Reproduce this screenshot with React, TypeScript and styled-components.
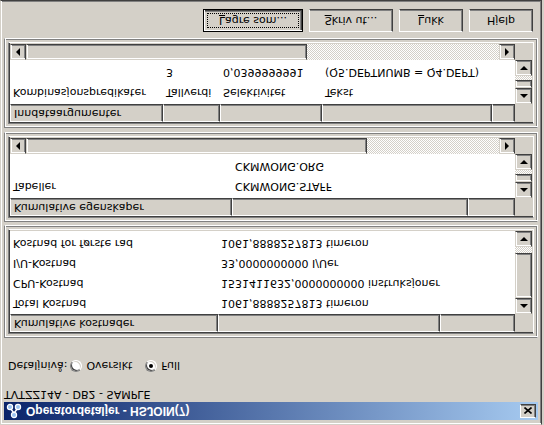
import React from "react";
import styled, { createGlobalStyle } from "styled-components";

const GlobalStyle = createGlobalStyle`
  html, body {
    margin: 0;
    padding: 0;
    background: #d4d0c8;
  }
  body {
    font-family: "DejaVu Sans", "Liberation Sans", sans-serif;
    font-size: 11px;
    color: #000;
  }
`;

// the reference is shown upside down, so the whole dialog is mirrored vertically
const Stage = styled.div`
  width: 544px;
  height: 425px;
  overflow: hidden;
  background: #d4d0c8;
  transform: scaleY(-1);
`;

const Window = styled.div`
  box-sizing: border-box;
  width: 542px;
  height: 425px;
  display: flex;
  flex-direction: column;
  padding: 3px;
  border: 1px solid;
  border-color: #d4d0c8 #404040 #404040 #d4d0c8;
  box-shadow: inset 1px 1px 0 #fff, inset -1px -1px 0 #808080;
`;

const TitleBar = styled.div`
  height: 18px;
  margin-top: 1px;
  display: flex;
  align-items: center;
  padding: 0 2px;
  background: linear-gradient(to right, #0a246a, #a6caf0);
  color: #fff;
`;

const TitleText = styled.span`
  flex: 1;
  margin-left: 4px;
  font-family: "Liberation Sans", Arial, sans-serif;
  font-weight: bold;
  font-size: 12px;
  white-space: nowrap;
`;

const CloseBtn = styled.div`
  box-sizing: border-box;
  width: 16px;
  height: 14px;
  display: flex;
  align-items: center;
  justify-content: center;
  background: #d4d0c8;
  border: 1px solid;
  border-color: #fff #404040 #404040 #fff;
  box-shadow: inset -1px -1px 0 #808080;
`;

const SubTitle = styled.div`
  height: 16px;
  line-height: 16px;
  white-space: nowrap;
`;

const DetailRow = styled.div`
  margin-top: 12px;
  height: 16px;
  display: flex;
  align-items: center;
  padding-left: 4px;
`;

const RadioOpt = styled.label<{ $gap: number }>`
  display: flex;
  align-items: center;
  gap: 4px;
  margin-left: ${(p) => p.$gap}px;
`;

const Radio = styled.span<{ $on?: boolean }>`
  box-sizing: border-box;
  width: 12px;
  height: 12px;
  border-radius: 50%;
  background: #fff;
  border: 1px solid;
  border-color: #808080 #fff #fff #808080;
  box-shadow: inset 1px 1px 0 #404040, inset -1px -1px 0 #d4d0c8;
  display: flex;
  align-items: center;
  justify-content: center;

  &::after {
    content: "";
    width: 4px;
    height: 4px;
    border-radius: 50%;
    background: ${(p) => (p.$on ? "#000" : "transparent")};
  }
`;

const Panel = styled.div<{ $h: number; $mt: number }>`
  box-sizing: border-box;
  height: ${(p) => p.$h}px;
  margin-top: ${(p) => p.$mt}px;
  padding: 3px;
  display: flex;
  border: 1px solid;
  border-color: #808080 #fff #fff #808080;
  box-shadow: inset 1px 1px 0 #fff, inset -1px -1px 0 #808080;
`;

const ListFrame = styled.div<{ $hscroll: boolean }>`
  flex: 1;
  display: grid;
  grid-template-columns: 505px 17px;
  grid-template-rows: ${(p) => (p.$hscroll ? "18px 1fr 16px" : "18px 1fr")};
  padding: 1px;
  border: 1px solid;
  border-color: #808080 #fff #fff #808080;
  box-shadow: inset 1px 1px 0 #404040, inset -1px -1px 0 #d4d0c8;
`;

const HeaderRow = styled.div`
  display: flex;
`;

const HeaderCell = styled.div<{ $w?: number }>`
  box-sizing: border-box;
  ${(p) => (p.$w ? `width: ${p.$w}px;` : "flex: 1;")}
  height: 18px;
  line-height: 16px;
  padding-left: 3px;
  white-space: nowrap;
  overflow: hidden;
  background: #d4d0c8;
  border: 1px solid;
  border-color: #fff #404040 #404040 #fff;
  box-shadow: inset -1px -1px 0 #808080;
`;

const HeaderGap = styled.div`
  background: #d4d0c8;
`;

const Rows = styled.div<{ $pt: number }>`
  background: #fff;
  padding-top: ${(p) => p.$pt}px;
  overflow: hidden;
`;

const Row = styled.div`
  display: flex;
  height: 20px;
  line-height: 20px;
`;

const Cell = styled.div<{ $w?: number }>`
  box-sizing: border-box;
  ${(p) => (p.$w ? `width: ${p.$w}px;` : "flex: 1;")}
  padding-left: 3px;
  white-space: nowrap;
`;

const VScroll = styled.div`
  display: flex;
  flex-direction: column;
`;

const HScroll = styled.div`
  display: flex;
`;

const Track = styled.div`
  flex: 1;
  background: repeating-conic-gradient(#fff 0 25%, #d4d0c8 0 50%) 0 0 / 2px 2px;
`;

const Thumb = styled.div<{ $size: number; $vertical?: boolean }>`
  box-sizing: border-box;
  flex: none;
  ${(p) => (p.$vertical ? `height: ${p.$size}px;` : `width: ${p.$size}px;`)}
  background: #d4d0c8;
  border: 1px solid;
  border-color: #d4d0c8 #404040 #404040 #d4d0c8;
  box-shadow: inset 1px 1px 0 #fff, inset -1px -1px 0 #808080;
`;

const ScrollBtn = styled.div<{ $dir: "up" | "down" | "left" | "right" }>`
  box-sizing: border-box;
  flex: none;
  width: ${(p) => (p.$dir === "up" || p.$dir === "down" ? "17px" : "16px")};
  height: 16px;
  display: flex;
  align-items: center;
  justify-content: center;
  background: #d4d0c8;
  border: 1px solid;
  border-color: #d4d0c8 #404040 #404040 #d4d0c8;
  box-shadow: inset 1px 1px 0 #fff, inset -1px -1px 0 #808080;

  &::after {
    content: "";
    width: 0;
    height: 0;
    ${(p) =>
      p.$dir === "up"
        ? "border-left: 4px solid transparent; border-right: 4px solid transparent; border-bottom: 4px solid #000;"
        : p.$dir === "down"
        ? "border-left: 4px solid transparent; border-right: 4px solid transparent; border-top: 4px solid #000;"
        : p.$dir === "left"
        ? "border-top: 4px solid transparent; border-bottom: 4px solid transparent; border-right: 4px solid #000;"
        : "border-top: 4px solid transparent; border-bottom: 4px solid transparent; border-left: 4px solid #000;"}
  }
`;

const Corner = styled.div`
  background: #d4d0c8;
`;

const ButtonRow = styled.div`
  margin-top: 6px;
  display: flex;
  justify-content: flex-end;
  gap: 6px;
  padding-right: 5px;
`;

const PushButton = styled.div<{ $w: number; $default?: boolean }>`
  box-sizing: border-box;
  width: ${(p) => p.$w}px;
  height: 23px;
  padding: 3px;
  display: flex;
  background: #d4d0c8;
  border: 1px solid;
  border-color: ${(p) => (p.$default ? "#000" : "#fff #404040 #404040 #fff")};
  box-shadow: ${(p) =>
    p.$default
      ? "inset 1px 1px 0 #fff, inset -1px -1px 0 #404040, inset -2px -2px 0 #808080"
      : "inset -1px -1px 0 #808080"};
`;

const FocusRing = styled.span<{ $on?: boolean }>`
  flex: 1;
  display: flex;
  align-items: center;
  justify-content: center;
  border: 1px dotted ${(p) => (p.$on ? "#000" : "transparent")};
  white-space: nowrap;
`;

const OperatorIcon = () => (
  <svg width="16" height="16" viewBox="0 0 16 16">
    <path d="M8 6 L4 11 M8 6 L12 11" stroke="#fff" strokeWidth="1.5" />
    <circle cx="8" cy="4" r="2.6" fill="#9cc4f0" stroke="#fff" strokeWidth="1.2" />
    <circle cx="4" cy="12" r="2.6" fill="#9cc4f0" stroke="#fff" strokeWidth="1.2" />
    <circle cx="12" cy="12" r="2.6" fill="#9cc4f0" stroke="#fff" strokeWidth="1.2" />
  </svg>
);

const CloseIcon = () => (
  <svg width="8" height="7" viewBox="0 0 8 7">
    <path d="M0.5 0.5 L7.5 6.5 M7.5 0.5 L0.5 6.5" stroke="#000" strokeWidth="1.6" />
  </svg>
);

type ListProps = {
  headers: { label: string; w?: number }[];
  rows: string[][];
  padTop: number;
  vThumb: number;
  hThumb?: number;
};

const ListView = ({ headers, rows, padTop, vThumb, hThumb }: ListProps) => (
  <ListFrame $hscroll={hThumb !== undefined}>
    <HeaderRow>
      {headers.map((h, i) => (
        <HeaderCell key={i} $w={h.w}>
          {h.label}
        </HeaderCell>
      ))}
    </HeaderRow>
    <HeaderGap />
    <Rows $pt={padTop}>
      {rows.map((r, i) => (
        <Row key={i}>
          {r.map((c, j) => (
            <Cell key={j} $w={headers[j]?.w}>
              {c}
            </Cell>
          ))}
        </Row>
      ))}
    </Rows>
    <VScroll>
      <ScrollBtn $dir="up" />
      <Thumb $vertical $size={vThumb} />
      <Track />
      <ScrollBtn $dir="down" />
    </VScroll>
    {hThumb !== undefined && (
      <>
        <HScroll>
          <ScrollBtn $dir="left" />
          <Thumb $size={hThumb} />
          <Track />
          <ScrollBtn $dir="right" />
        </HScroll>
        <Corner />
      </>
    )}
  </ListFrame>
);

export default function App() {
  return (
    <>
      <GlobalStyle />
      <Stage>
        <Window>
          <TitleBar>
            <OperatorIcon />
            <TitleText>Operatordetaljer - HSJOIN(7)</TitleText>
            <CloseBtn>
              <CloseIcon />
            </CloseBtn>
          </TitleBar>
          <SubTitle>TVTZZ14A - DB2 - SAMPLE</SubTitle>
          <DetailRow>
            <span>Detaljnivå:</span>
            <RadioOpt $gap={3}>
              <Radio />
              Oversikt
            </RadioOpt>
            <RadioOpt $gap={13}>
              <Radio $on />
              Full
            </RadioOpt>
          </DetailRow>

          <Panel $h={113} $mt={20}>
            <ListView
              headers={[{ label: "Kumulative kostnader", w: 208 }, { label: "", w: 222 }, { label: "" }]}
              rows={[
                ["Total Kostnad", "1061,8888257813 timeron"],
                ["CPU-Kostnad", "1531411632,0000000000 instruksjoner"],
                ["I/U-Kostnad", "33,0000000000 I/Uer"],
                ["Kostnad for første rad", "1061,8888257813 timeron"],
              ]}
              padTop={1}
              vThumb={45}
            />
          </Panel>

          <Panel $h={90} $mt={3}>
            <ListView
              headers={[{ label: "Kumulative egenskaper", w: 222 }, { label: "", w: 236 }, { label: "" }]}
              rows={[
                ["Tabeller", "CKMWONG.STAFF"],
                ["", "CKMWONG.ORG"],
              ]}
              padTop={2}
              vThumb={8}
              hThumb={341}
            />
          </Panel>

          <Panel $h={90} $mt={4}>
            <ListView
              headers={[
                { label: "Inndataargumenter", w: 153 },
                { label: "", w: 57 },
                { label: "", w: 102 },
                { label: "", w: 170 },
                { label: "" },
              ]}
              rows={[
                ["Kombinasjonspredikater", "Tallverdi", "Selektivitet", "Tekst"],
                ["", "3", "0,0399999991", "(Q5.DEPTNUMB = Q4.DEPT)"],
              ]}
              padTop={2}
              vThumb={8}
              hThumb={281}
            />
          </Panel>

          <ButtonRow>
            <PushButton $w={100} $default>
              <FocusRing $on>
                <u>L</u>agre som...
              </FocusRing>
            </PushButton>
            <PushButton $w={84}>
              <FocusRing>
                <u>S</u>kriv ut...
              </FocusRing>
            </PushButton>
            <PushButton $w={64}>
              <FocusRing>
                <u>L</u>ukk
              </FocusRing>
            </PushButton>
            <PushButton $w={64}>
              <FocusRing>Hjelp</FocusRing>
            </PushButton>
          </ButtonRow>
        </Window>
      </Stage>
    </>
  );
}
